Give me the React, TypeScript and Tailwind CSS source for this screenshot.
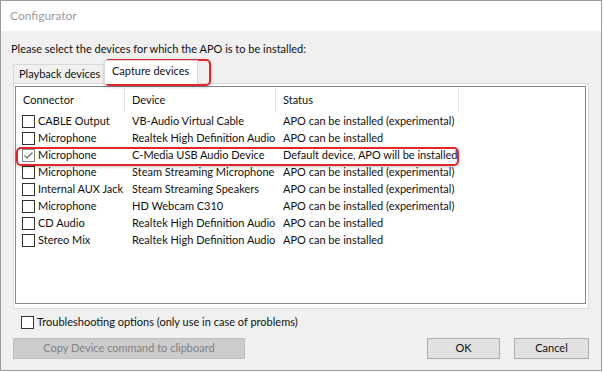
import React from 'react';

const rows = [
  { conn: 'CABLE Output', dev: 'VB-Audio Virtual Cable', status: 'APO can be installed (experimental)' },
  { conn: 'Microphone', dev: 'Realtek High Definition Audio', status: 'APO can be installed' },
  { conn: 'Microphone', dev: 'C-Media USB Audio Device', status: 'Default device, APO will be installed', checked: true },
  { conn: 'Microphone', dev: 'Steam Streaming Microphone', status: 'APO can be installed (experimental)' },
  { conn: 'Internal AUX Jack', dev: 'Steam Streaming Speakers', status: 'APO can be installed (experimental)' },
  { conn: 'Microphone', dev: 'HD Webcam C310', status: 'APO can be installed (experimental)' },
  { conn: 'CD Audio', dev: 'Realtek High Definition Audio', status: 'APO can be installed' },
  { conn: 'Stereo Mix', dev: 'Realtek High Definition Audio', status: 'APO can be installed' },
];

function Checkbox({ checked }: { checked?: boolean }) {
  return (
    <span
      className={
        'w-[13px] h-[13px] shrink-0 border bg-white flex items-center justify-center ' +
        (checked ? 'border-[#8a8a8a]' : 'border-[#333333]')
      }
    >
      {checked && (
        <svg width="11" height="11" viewBox="0 0 11 11" fill="none">
          <path d="M1.5 5.5 L4 8 L9.5 2.5" stroke="#6b6b6b" strokeWidth="1.2" />
        </svg>
      )}
    </span>
  );
}

function Highlight({ className }: { className: string }) {
  return (
    <div
      className={
        'absolute border-2 border-[#e3262b] rounded-[5px] shadow-[0_1px_3px_rgba(0,0,0,0.25)] pointer-events-none ' +
        className
      }
    />
  );
}

export default function App() {
  return (
    <div className="w-[604px] h-[372px] bg-white font-['Lato',sans-serif] text-[11px] text-[#111111]">
      <div className="relative w-[602px] h-[371px] border border-[#9a9a9a] bg-[#f0f0f0] flex flex-col whitespace-nowrap">
        {/* title bar */}
        <div className="h-[30px] bg-white flex items-center pl-[9px] text-[12px] text-[#9b9b9b] shrink-0">Configurator</div>

        <div className="px-[10px] pt-[10px] leading-[16px]">
          Please select the devices for which the APO is to be installed:
        </div>

        {/* tabs */}
        <div className="flex items-end pl-[12px] mt-[3px] h-[24px] relative z-10">
          <div className="h-[20px] w-[92px] border border-[#d9d9d9] border-b-0 flex items-center pl-[5px]">
            Playback devices
          </div>
          <div className="h-[24px] w-[94px] -ml-[1px] border border-[#d9d9d9] border-b-0 bg-white flex items-center pl-[7px] pb-[2px]">
            Capture devices
          </div>
        </div>

        {/* tab panel */}
        <div className="mx-[12px] -mt-[1px] h-[226px] border border-[#d9d9d9] bg-white pl-[1px] pt-[2px] pr-[2px] pb-[4px] flex">
          <div className="flex-1 border border-[#828790] bg-white relative">
            <div className="flex h-[26px] items-center pt-[1px]">
              <div className="w-[109px] h-full pl-[7px] flex items-center border-r border-[#e5e5e5]">Connector</div>
              <div className="w-[151px] h-full pl-[7px] flex items-center border-r border-[#e5e5e5]">Device</div>
              <div className="w-[183px] h-full pl-[7px] flex items-center border-r border-[#e5e5e5]">Status</div>
            </div>
            {rows.map((r, i) => (
              <div key={i} className="flex h-[17px] items-center">
                <div className="w-[109px] flex items-center pl-[6px] gap-[3px]">
                  <Checkbox checked={r.checked} />
                  {r.conn}
                </div>
                <div className="w-[151px] pl-[7px]">{r.dev}</div>
                <div className="w-[183px] pl-[7px]">{r.status}</div>
              </div>
            ))}
            <Highlight className="left-[0px] top-[60px] w-[443px] h-[19px]" />
          </div>
        </div>

        <div className="flex items-center gap-[3px] pl-[20px] mt-[7px] h-[13px]">
          <Checkbox />
          Troubleshooting options (only use in case of problems)
        </div>

        <div className="flex items-center px-[12px] mt-[9px]">
          <div className="w-[232px] h-[21px] bg-[#cccccc] border border-[#bfbfbf] flex items-center justify-center text-[#838383]">
            Copy Device command to clipboard
          </div>
          <div className="ml-auto w-[73px] h-[21px] bg-[#e1e1e1] border border-[#adadad] flex items-center justify-center">
            OK
          </div>
          <div className="ml-[14px] w-[75px] h-[21px] bg-[#e1e1e1] border border-[#adadad] flex items-center justify-center">
            Cancel
          </div>
        </div>

        <Highlight className="left-[103px] top-[58px] w-[107px] h-[27px]" />
      </div>
    </div>
  );
}
